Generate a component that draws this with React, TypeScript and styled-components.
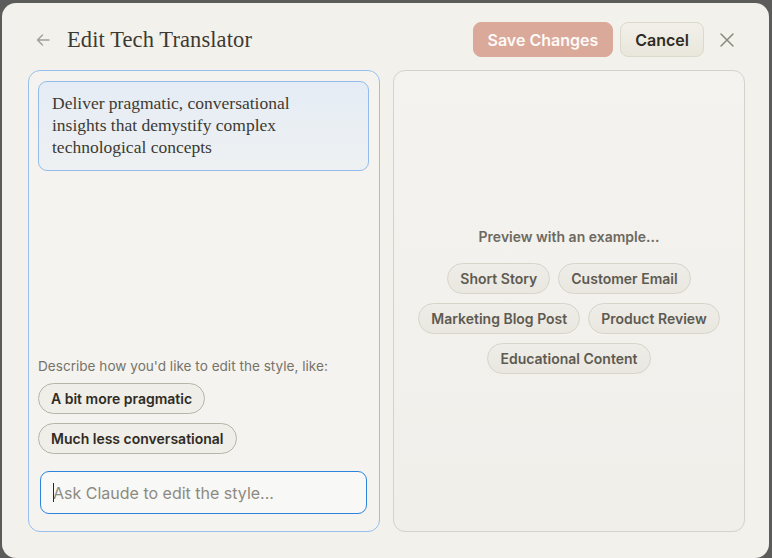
import React from "react";
import styled, { createGlobalStyle } from "styled-components";

const Global = createGlobalStyle`
  html, body { margin: 0; padding: 0; }
  body {
    background: #5c5c5a;
    font-family: Inter, "Open Sans", sans-serif;
    width: 772px;
    height: 558px;
    overflow: hidden;
  }
  * { box-sizing: border-box; }
`;

const Backdrop = styled.div`
  width: 772px;
  height: 558px;
  padding: 3px 3px 1px 2px;
`;

const Modal = styled.div`
  width: 767px;
  height: 555px;
  background: #f3f1ec;
  border-radius: 14px;
  padding: 19px 24px 26px 26px;
  display: flex;
  flex-direction: column;
  gap: 13px;
`;

const Header = styled.div`
  display: flex;
  align-items: center;
  height: 35px;
`;

const BackButton = styled.button`
  border: none;
  background: none;
  padding: 0;
  margin-left: 6px;
  width: 18px;
  height: 18px;
  color: #a19e96;
  display: flex;
  align-items: center;
  justify-content: center;
  cursor: pointer;
`;

const Title = styled.h1`
  margin: 0 0 0 15px;
  font-family: "Liberation Serif", serif;
  font-weight: 400;
  font-size: 22.5px;
  color: #3d3a33;
  flex: 1;
  letter-spacing: 0.1px;
`;

const Actions = styled.div`
  display: flex;
  align-items: center;
  gap: 7px;
`;

const Button = styled.button<{ $primary?: boolean }>`
  height: 35px;
  border-radius: 8px;
  font-family: Inter, sans-serif;
  font-size: 16px;
  font-weight: 600;
  padding: 0 14px;
  cursor: pointer;
  border: 1px solid ${(p) => (p.$primary ? "#dba999" : "#dcd8cc")};
  background: ${(p) => (p.$primary ? "#dba999" : "linear-gradient(#f2f0e9, #e9e6dc)")};
  color: ${(p) => (p.$primary ? "#fefaf8" : "#2f2c26")};
`;

const CloseButton = styled.button`
  border: none;
  background: none;
  width: 30px;
  height: 30px;
  margin: 0 3px 0 8px;
  padding: 0;
  color: #8b877e;
  display: flex;
  align-items: center;
  justify-content: center;
  cursor: pointer;
`;

const Panels = styled.div`
  flex: 1;
  display: grid;
  grid-template-columns: 352px 352px;
  gap: 13px;
  min-height: 0;
`;

const EditorPanel = styled.div`
  border: 1px solid #98c0ef;
  border-radius: 12px;
  background: #f4f3ef;
  padding: 10px 10px 17px 9px;
  display: flex;
  flex-direction: column;
`;

const StyleBox = styled.div`
  border: 1px solid #95bbec;
  border-radius: 9px;
  background: linear-gradient(#e5ecf5, #eef1f2);
  padding: 10px 55px 12px 13px;
  height: 90px;
  font-family: "Liberation Serif", serif;
  font-size: 17.5px;
  line-height: 22px;
  color: #3d3a33;
`;

const Spacer = styled.div`
  flex: 1;
`;

const Hint = styled.div`
  font-size: 13.6px;
  color: #77736a;
  margin-bottom: 9px;
`;

const ChipStack = styled.div`
  display: flex;
  flex-direction: column;
  align-items: flex-start;
  gap: 9px;
  margin-bottom: 17px;
`;

const Chip = styled.button<{ $muted?: boolean }>`
  height: 31px;
  border-radius: 999px;
  padding: 0 12px;
  font-family: Inter, sans-serif;
  font-size: 14px;
  font-weight: 600;
  cursor: pointer;
  border: 1px solid ${(p) => (p.$muted ? "#d8d4ca" : "#b9b4a8")};
  background: ${(p) => (p.$muted ? "linear-gradient(#efede7, #e9e7e0)" : "#f0eee8")};
  color: ${(p) => (p.$muted ? "#5e5a51" : "#2e2b25")};
`;

const InputWrap = styled.div`
  position: relative;
  margin: 0 2px;
`;

const Input = styled.input`
  width: 100%;
  height: 43px;
  border: 1.5px solid #2e84dc;
  border-radius: 9px;
  background: #f8f8f6;
  padding: 0 12px;
  font-family: Inter, sans-serif;
  font-size: 16px;
  color: #2e2b25;
  outline: none;
  caret-color: transparent;
  &::placeholder {
    color: #8d8a82;
  }
`;

const Caret = styled.span`
  position: absolute;
  left: 13px;
  top: 12px;
  width: 1px;
  height: 19px;
  background: #2a2824;
  pointer-events: none;
`;

const PreviewPanel = styled.div`
  border: 1px solid #d6d2c9;
  border-radius: 12px;
  background: linear-gradient(#f4f3ef, #f1efea);
  display: flex;
  flex-direction: column;
  align-items: center;
  justify-content: center;
`;

const PreviewLabel = styled.div`
  font-size: 14px;
  font-weight: 600;
  color: #6d695f;
  margin-bottom: 18px;
`;

const ChipWrap = styled.div`
  display: flex;
  flex-wrap: wrap;
  justify-content: center;
  gap: 9px 8px;
  width: 310px;
`;

const examples = [
  "Short Story",
  "Customer Email",
  "Marketing Blog Post",
  "Product Review",
  "Educational Content",
];

export default function App() {
  return (
    <>
      <Global />
      <Backdrop>
        <Modal>
          <Header>
            <BackButton aria-label="Back">
              <svg width="16" height="16" viewBox="0 0 16 16" fill="none" stroke="currentColor" strokeWidth="1.4" strokeLinecap="round" strokeLinejoin="round">
                <path d="M14 8H2.5M7.5 3 2.5 8l5 5" />
              </svg>
            </BackButton>
            <Title>Edit Tech Translator</Title>
            <Actions>
              <Button $primary>Save Changes</Button>
              <Button>Cancel</Button>
            </Actions>
            <CloseButton aria-label="Close">
              <svg width="16" height="16" viewBox="0 0 16 16" fill="none" stroke="currentColor" strokeWidth="1.5" strokeLinecap="round">
                <path d="M2 2l12 12M14 2 2 14" />
              </svg>
            </CloseButton>
          </Header>
          <Panels>
            <EditorPanel>
              <StyleBox>
                Deliver pragmatic, conversational insights that demystify complex technological concepts
              </StyleBox>
              <Spacer />
              <Hint>Describe how you'd like to edit the style, like:</Hint>
              <ChipStack>
                <Chip>A bit more pragmatic</Chip>
                <Chip>Much less conversational</Chip>
              </ChipStack>
              <InputWrap>
                <Input placeholder="Ask Claude to edit the style..." />
                <Caret />
              </InputWrap>
            </EditorPanel>
            <PreviewPanel>
              <PreviewLabel>Preview with an example...</PreviewLabel>
              <ChipWrap>
                {examples.map((e) => (
                  <Chip key={e} $muted>
                    {e}
                  </Chip>
                ))}
              </ChipWrap>
            </PreviewPanel>
          </Panels>
        </Modal>
      </Backdrop>
    </>
  );
}
